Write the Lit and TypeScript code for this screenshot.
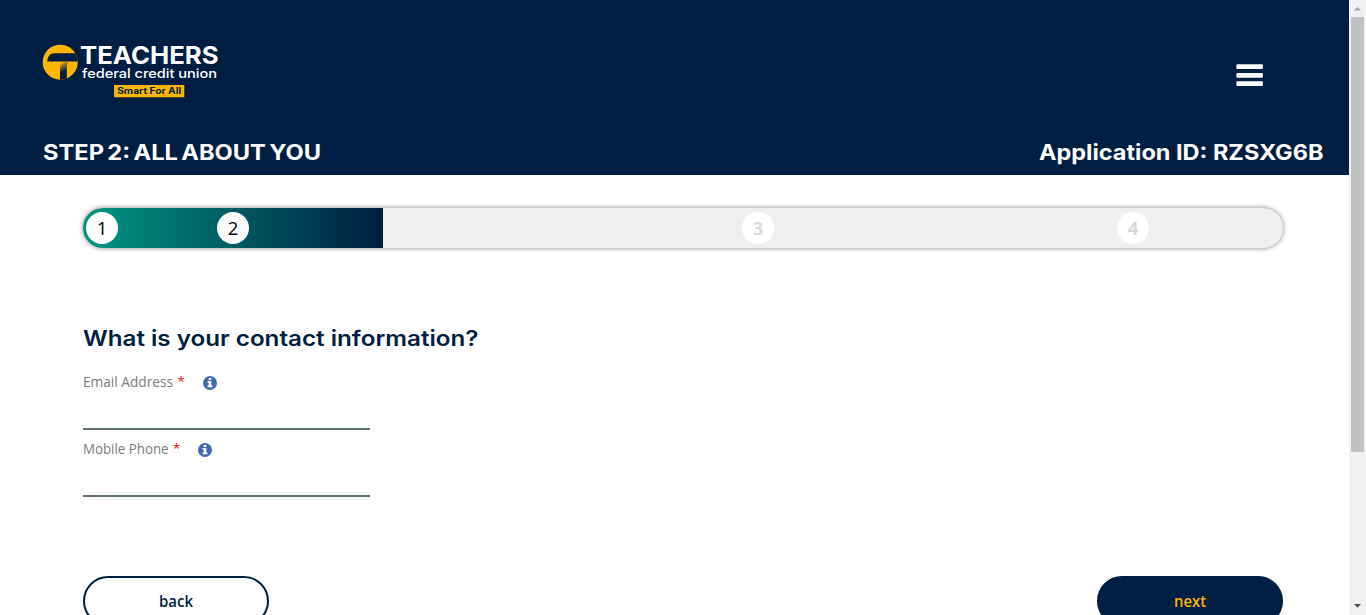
import { LitElement, html, css, svg } from "lit";
import { customElement, property } from "lit/decorators.js";

// One line of text set to an exact measure.
@customElement("fit-text")
export class FitText extends LitElement {
  @property() text = "";
  @property({ type: Number }) width = 100;
  @property({ type: Number }) height = 20;
  @property({ type: Number }) base = 16;
  static styles = css`
    :host { display: block; flex: none; }
    svg { display: block; overflow: visible; }
    text { fill: currentColor; }
  `;
  render() {
    return html`<svg width=${this.width} height=${this.height}>${svg`<text x="0" y=${this.base} textLength=${this.width} lengthAdjust="spacingAndGlyphs">${this.text}</text>`}</svg>`;
  }
}

@customElement("app-root")
export class AppRoot extends LitElement {
  static styles = css`
    :host { display: grid; grid-template-columns: 1349px 17px; height: 615px; overflow: hidden; background: #fff; font-family: "Open Sans", "Noto Sans", sans-serif; color: #001e41; }
    .page { height: 615px; overflow: hidden; }
    header { box-sizing: border-box; height: 175px; background: #001e41; color: #fff; padding: 44px 26px 0 43px; }
    .brand { display: flex; justify-content: space-between; height: 98px; }
    .menu { margin: 20px 60px 0 0; }
    svg { display: block; }
    .logo { overflow: visible; }
    .logo text { font-family: Inter, sans-serif; }
    .name { font-size: 24.2px; font-weight: 700; fill: #fff; }
    .sub { font-size: 12.8px; font-weight: 500; fill: #fff; }
    .tag { font-size: 8.6px; font-weight: 700; fill: #001e41; }
    .titles { display: flex; justify-content: space-between; font: 700 21.2px Inter, sans-serif; }
    .step { word-spacing: -2px; }
    main { padding: 33px 66px 0 83px; }
    .bar { height: 40px; width: 1200px; border-radius: 20px; background: #efefef; box-shadow: 0 0 5px rgba(0,0,0,.5); overflow: hidden; }
    .track { display: flex; align-items: center; height: 40px; background: linear-gradient(to right, #00917f 5%, #001e41 100%) 0 0 / 300px 40px no-repeat; }
    .dot { display: flex; align-items: center; justify-content: center; flex: none; width: 32px; height: 32px; border-radius: 50%; background: #fff; font: 500 18.5px/32px "Open Sans", sans-serif; color: #000; }
    .dot.off { color: #d8d8d8; font-weight: 700; }
    .d1 { margin-left: 3px; }
    .d2 { margin-left: 99px; }
    .d3 { margin-left: 493px; }
    .d4 { margin-left: 343px; }
    .question { margin-top: 80px; font: 600 21.2px Inter, sans-serif; }
    .fields { padding-top: 17px; }
    .field { width: 287px; height: 65px; border-bottom: 2px solid #627171; }
    .label { display: flex; font-size: 13.8px; color: #7b7b7b; }
    .label fit-text { margin-top: 10px; }
    .star { width: 6px; margin: 9px 19px 0 4.5px; color: #f00; font-size: 13px; line-height: 19px; }
    .info { margin-top: 13.4px; }
    .actions { display: flex; justify-content: space-between; margin-top: 79px; }
    button { box-sizing: border-box; display: flex; justify-content: center; width: 186px; height: 50px; padding: 14px 0 0; border: 2px solid #001e41; border-radius: 25px; background: #fff; color: #001e41; font: 600 15.5px "Open Sans", sans-serif; }
    button.next { background: #001e41; color: #ffb600; }
    .scroll { display: flex; flex-direction: column; align-items: center; background: #f1f1f1; height: 615px; }
    .thumb { width: 13px; height: 435px; background: #c1c1c1; margin-bottom: auto; }
  `;

  private field(label: string, width: number) {
    return html`<div class="field"><div class="label">
      <fit-text .text=${label} .width=${width} .height=${20} .base=${14}></fit-text>
      <span class="star">*</span>
      <svg class="info" width="14" height="14" viewBox="0 0 14 14"><circle cx="7" cy="7" r="7" fill="#416bae"/><path fill="#fff" d="M5.7 2h2.6v2H5.7zM4.6 5h3.7v4.5h1.1v1.8H4.6V9.5h1.1V6.7H4.6z"/></svg>
    </div></div>`;
  }

  render() {
    return html`
      <div class="page">
        <header>
          <div class="brand">
            <svg class="logo" width="180" height="60" viewBox="43 44 180 60">
              <defs>
                <linearGradient id="fold" x1="0.2" y1="0" x2="0.45" y2="1"><stop offset="0" stop-color="#e8a80c"/><stop offset=".2" stop-color="#9c7a2c"/><stop offset=".55" stop-color="#001e41"/></linearGradient>
                <clipPath id="coin"><circle cx="60.2" cy="62.2" r="17.5"/></clipPath>
              </defs>
              <circle cx="60.2" cy="62.2" r="17.5" fill="#ffb600"/>
              <g clip-path="url(#coin)">
                <path fill="#001e41" d="M47.2 61.6C47.5 56.5 50 53.3 54.5 53.3H79v8.3z"/>
                <path fill="url(#fold)" d="M60 80V67.5C60 64 62.5 62 68.5 61.8 67.2 63.2 66.8 65 66.8 67V80z"/>
              </g>
              <text class="name" x="80" y="64.2" textLength="138.5" lengthAdjust="spacingAndGlyphs">TEACHERS</text>
              <text class="sub" x="82" y="77.9" textLength="135" lengthAdjust="spacingAndGlyphs">federal credit union</text>
              <path fill="#ffb600" d="M114 85h70.3v12.2H114z"/>
              <text class="tag" x="117.2" y="94.4" textLength="64" lengthAdjust="spacingAndGlyphs">Smart For All</text>
            </svg>
            <svg class="menu" width="27" height="23" viewBox="0 0 27 23" fill="#fff"><rect x=".4" y=".3" width="26.5" height="4.7" rx="1"/><rect x=".4" y="9" width="26.5" height="4.7" rx="1"/><rect x=".4" y="17.3" width="26.5" height="4.7" rx="1"/></svg>
          </div>
          <div class="titles">
            <fit-text class="step" .text=${"STEP 2: ALL ABOUT YOU"} .width=${278} .height=${26} .base=${18.3}></fit-text>
            <fit-text .text=${"Application ID: RZSXG6B"} .width=${284.5} .height=${26} .base=${18.3}></fit-text>
          </div>
        </header>
        <main>
          <div class="bar"><div class="track">
            <span class="dot d1">1</span><span class="dot d2">2</span><span class="dot off d3">3</span><span class="dot off d4">4</span>
          </div></div>
          <div class="question"><fit-text .text=${"What is your contact information?"} .width=${395.5} .height=${18} .base=${18}></fit-text></div>
          <div class="fields">
            ${this.field("Email Address", 90)}
            ${this.field("Mobile Phone", 85.5)}
          </div>
          <div class="actions">
            <button><fit-text .text=${"back"} .width=${34} .height=${20} .base=${14.5}></fit-text></button>
            <button class="next"><fit-text .text=${"next"} .width=${32} .height=${20} .base=${14.5}></fit-text></button>
          </div>
        </main>
      </div>
      <div class="scroll">
        <svg width="17" height="17"><path d="M5 10.5h7L8.5 7z" fill="#a3a3a3"/></svg>
        <div class="thumb"></div>
        <svg width="17" height="17"><path d="M5 6h7L8.5 9.7z" fill="#505050"/></svg>
      </div>
    `;
  }
}
